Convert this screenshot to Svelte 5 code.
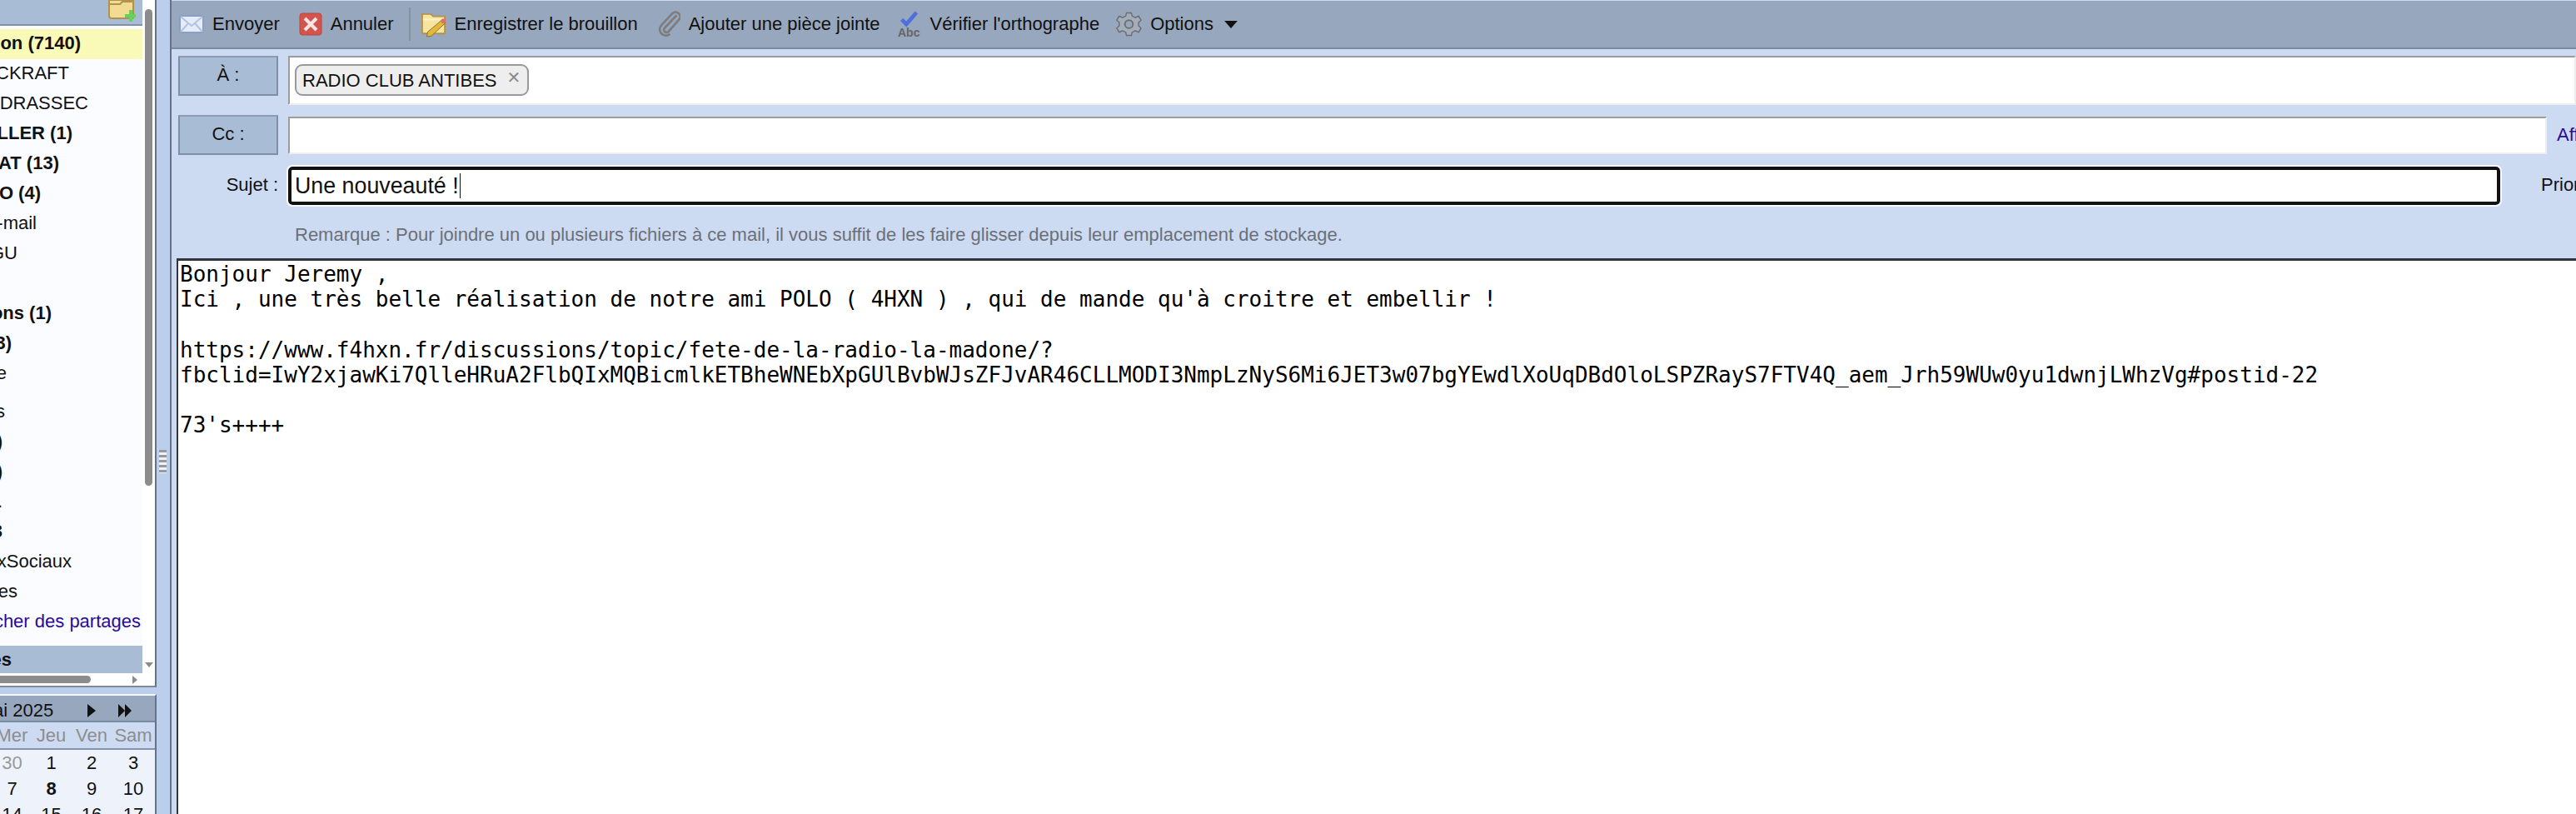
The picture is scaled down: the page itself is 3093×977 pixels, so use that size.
<script>
  // end = x where the folder label stops; the tree is scrolled so the start is cut off
  const folders = [
    { label: 'Réception (7140)', end: 97, bold: true, selected: true },
    { label: 'CKRAFT', end: 83 },
    { label: 'DRASSEC', end: 106 },
    { label: 'LLER (1)', end: 87, bold: true },
    { label: 'AT (13)', end: 71, bold: true },
    { label: 'O (4)', end: 49, bold: true },
    { label: 'e-mail', end: 44 },
    { label: 'GU', end: 21 },
    { label: '', end: 0 },
    { label: 'ons (1)', end: 62, bold: true },
    { label: '(3)', end: 14, bold: true },
    { label: 'e', end: 8 },
    { label: 's', end: 6, gap: true },
    { label: ')', end: 3, bold: true },
    { label: ')', end: 3, bold: true },
    { label: '.', end: 3 },
    { label: '3', end: 3, bold: true },
    { label: 'xSociaux', end: 86 },
    { label: 'es', end: 21 },
    { label: 'Rechercher des partages', end: 169, link: true }
  ];

  const calRows = [
    [['30', 'muted'], ['1'], ['2'], ['3']],
    [['7'], ['8', 'bold'], ['9'], ['10']],
    [['14'], ['15'], ['16'], ['17']]
  ];

  const url = 'fbclid=IwY2xjawKi7QlleHRuA2FlbQIxMQBicmlkETBheWNEbXpGUlBvbWJsZFJvAR46CLLMODI3NmpLzNyS6Mi6JET3w07bgYEwdlXoUqDBdOloLSPZRayS7FTV4Q_aem_Jrh59WUw0yu1dwnjLWhzVg#postid-22';
</script>

<div class="page">
  <aside class="side">
    <div class="tree-panel">
      <div class="tree-view">
        <div class="tree-head">
          <svg class="new-folder" width="33" height="28" viewBox="0 0 33 28">
            <path d="M1 0h28a1 1 0 0 1 1 1v20a1 1 0 0 1-1 1H4a3 3 0 0 1-3-3z" fill="#f2dc93" stroke="#b1924f" stroke-width="2"/>
            <path d="M2 5h12l3-3h12" fill="none" stroke="#b1924f" stroke-width="2"/>
            <path d="M25 14h4v5h4v4h-4v5h-4v-5h-5v-4h5z" fill="#64d25c" transform="translate(0 -2)"/>
          </svg>
        </div>
        <div class="tree-list">
          {#each folders as f}
            <div class="folder" class:bold={f.bold} class:selected={f.selected} class:gap={f.gap} class:link={f.link}>
              <span class="folder-label" style="width: {f.end}px">{f.label}</span>
            </div>
          {/each}
        </div>
        <div class="tree-foot"><span class="folder-label bold" style="width: 14px">es</span></div>
        <div class="hbar">
          <span class="hthumb"></span>
          <svg class="harrow" width="6" height="10" viewBox="0 0 6 10"><path d="M0 0l6 5-6 5z" fill="#8c8c8c"/></svg>
        </div>
      </div>
      <div class="vbar">
        <span class="vthumb"></span>
        <svg class="varrow" width="10" height="6" viewBox="0 0 10 6"><path d="M0 0h10l-5 6z" fill="#8c8c8c"/></svg>
      </div>
    </div>

    <div class="calendar">
      <div class="cal-head">
        <span class="month">ai 2025</span>
        <svg width="10" height="16" viewBox="0 0 10 16" class="cal-next"><path d="M0 0l10 8-10 8z" fill="#111"/></svg>
        <svg width="16" height="16" viewBox="0 0 18 16" class="cal-last" preserveAspectRatio="none"><path d="M0 0l9 8-9 8zM9 0l9 8-9 8z" fill="#111"/></svg>
      </div>
      <div class="cal-days">
        <span>Mer</span><span>Jeu</span><span>Ven</span><span>Sam</span>
      </div>
      <div class="cal-body">
        {#each calRows as row}
          <div class="cal-row">
            {#each row as c}
              <span class:muted={c[1] === 'muted'} class:bold={c[1] === 'bold'}>{c[0]}</span>
            {/each}
          </div>
        {/each}
      </div>
    </div>
  </aside>

  <div class="gutter">
    <span class="grip"></span>
  </div>

  <main class="compose">
    <div class="toolbar">
      <button class="tool send">
        <svg width="30" height="24" viewBox="0 0 30 24">
          <rect x="1" y="2" width="28" height="20" rx="2" fill="#e4ecf8" stroke="#8b9fc6" stroke-width="2"/>
          <path d="M2 3l13 11L28 3M2 21l9-10M28 21l-9-10" fill="none" stroke="#b3c3df" stroke-width="2"/>
        </svg>
        Envoyer
      </button>
      <button class="tool cancel">
        <svg width="28" height="28" viewBox="0 0 28 28">
          <rect x="1" y="1" width="26" height="26" rx="3" fill="#d2544c" stroke="#c0443e" stroke-width="1"/>
          <path d="M7 7l14 14M21 7L7 21" stroke="#f7e6e4" stroke-width="4"/>
        </svg>
        Annuler
      </button>
      <span class="sep"></span>
      <button class="tool draft">
        <svg width="30" height="34" viewBox="0 0 32 34">
          <path d="M1 4h11l3 3h14a1 1 0 0 1 1 1v21H3a2 2 0 0 1-2-2z" fill="#f6e4a0" stroke="#b1924f" stroke-width="2"/>
          <path d="M2 11h27" stroke="#fff4c8" stroke-width="2"/>
          <path d="M27 11l4 4-18 17-6 1 1-6z" fill="#e3b93c" stroke="#8a6d26" stroke-width="1"/>
          <circle cx="28" cy="13" r="3" fill="#e0706a"/>
        </svg>
        Enregistrer le brouillon
      </button>
      <button class="tool">
        <svg width="27" height="32" viewBox="0 0 30 32">
          <path d="M24 5L8 22a3.500 3.500 0 0 0 5 5L27 11a6 6 0 0 0-9-8L4 18a8 8 0 0 0 11 12" transform="translate(1 -1)" fill="none" stroke="#7d7d7d" stroke-width="3"/>
        </svg>
        Ajouter une pièce jointe
      </button>
      <button class="tool">
        <svg width="30" height="34" viewBox="0 0 32 34">
          <path d="M6 11l6 6L25 2" fill="none" stroke="#4f6fdc" stroke-width="5"/>
          <text x="1" y="33" class="abc">Abc</text>
        </svg>
        Vérifier l'orthographe
      </button>
      <button class="tool">
        <svg width="31" height="32" viewBox="0 0 32 32">
          <path d="M13 2h6l1 4 4 2 4-2 3 5-3 3v4l3 3-3 5-4-2-4 2-1 4h-6l-1-4-4-2-4 2-3-5 3-3v-4L1 11l3-5 4 2 4-2z" fill="#a3aebd" stroke="#6e6e6e" stroke-width="1.500"/>
          <circle cx="16" cy="16" r="5" fill="#97a7bd" stroke="#6e6e6e" stroke-width="2"/>
        </svg>
        Options
        <svg class="caret" width="18" height="9" viewBox="0 0 14 8"><path d="M0 0h14l-7 8z" fill="#111"/></svg>
      </button>
    </div>

    <div class="fields">
      <div class="field-row to-row">
        <span class="addr-btn">À :</span>
        <div class="addr-input to-input">
          <span class="chip">RADIO CLUB ANTIBES<span class="chip-x">✕</span></span>
        </div>
      </div>
      <div class="field-row cc-row">
        <span class="addr-btn">Cc :</span>
        <div class="addr-input cc-input"></div>
        <span class="show-link">Afficher Cci</span>
      </div>
      <div class="field-row subject-row">
        <label class="subject-label" for="subject">Sujet :</label>
        <div class="subject" id="subject">Une nouveauté !<span class="cursor"></span></div>
        <span class="prio">Priorité</span>
      </div>
      <p class="note">Remarque : Pour joindre un ou plusieurs fichiers à ce mail, il vous suffit de les faire glisser depuis leur emplacement de stockage.</p>
    </div>

    <div class="body-wrap">
      <div class="message">
        <div>Bonjour Jeremy ,</div>
        <div>Ici , une très belle réalisation de notre ami POLO ( 4HXN ) , qui de mande qu'à croitre et embellir !</div>
        <div class="blank"></div>
        <div>https://www.f4hxn.fr/discussions/topic/fete-de-la-radio-la-madone/?</div>
        <div>{url}</div>
        <div class="blank"></div>
        <div>73's++++</div>
      </div>
    </div>
  </main>
</div>

<style>
  :global(body) { margin: 0; overflow: hidden; background: #bbcfec; }
  .page {
    display: flex;
    width: 3093px;
    height: 977px;
    overflow: hidden;
    font-family: "Liberation Sans", Arial, sans-serif;
    font-size: 22px;
    color: #111;
    background: #bbcfec;
  }
  button { font: inherit; color: inherit; background: none; border: 0; padding: 0; }

  /* left column */
  .side { width: 188px; flex: none; display: flex; flex-direction: column; overflow: hidden; }
  .tree-panel {
    flex: none;
    display: flex;
    background: #fff;
    border-right: 2px solid #667386;
    border-bottom: 2px solid #7f8b9c;
    box-sizing: border-box;
    height: 825px;
  }
  .tree-view { width: 171px; flex: none; display: flex; flex-direction: column; overflow: hidden; }
  .tree-head {
    height: 29px;
    flex: none;
    background: #a8bcd6;
    border-bottom: 2px solid #8091a8;
    display: flex;
    justify-content: flex-end;
    padding-right: 8px;
  }
  .tree-list {
    flex: 1;
    background: #fafcff;
    padding-top: 4px;
  }
  .folder {
    height: 36px;
    box-sizing: border-box;
    padding-bottom: 3px;
    display: flex;
    align-items: center;
    white-space: nowrap;
  }
  .folder.gap { margin-top: 10px; }
  .folder.selected { background: #fafab8; }
  .folder.link { color: #2a0a9a; }
  .folder-label { display: flex; justify-content: flex-end; flex: none; white-space: nowrap; }
  .bold { font-weight: 700; }
  .tree-foot {
    height: 33px;
    flex: none;
    background: #a8bcd6;
    display: flex;
    align-items: center;
    white-space: nowrap;
  }
  .hbar {
    height: 15px;
    flex: none;
    display: flex;
    align-items: center;
    justify-content: space-between;
    padding-right: 6px;
  }
  .hthumb { width: 109px; height: 9px; background: #8c8c8c; border-radius: 0 5px 5px 0; }
  .vbar { flex: 1; position: relative; }
  .vthumb {
    position: absolute;
    left: 3px;
    top: 11px;
    width: 9px;
    height: 572px;
    background: #8c8c8c;
    border-radius: 5px;
  }
  .varrow { position: absolute; left: 3px; top: 795px; }

  .calendar {
    margin-top: 8px;
    flex: 1;
    display: flex;
    flex-direction: column;
    border-top: 2px solid #f4f7fc;
    border-right: 2px solid #667386;
    background: #eef3fb;
  }
  .cal-head {
    height: 25px;
    padding-top: 5px;
    flex: none;
    background: #97a7bd;
    border-bottom: 2px solid #7a8aa0;
    display: flex;
    align-items: center;
    white-space: nowrap;
  }
  .month { width: 113px; margin-left: -8px; flex: none; overflow: hidden; }
  .cal-last { margin-left: 27px; }
  .cal-days, .cal-row {
    display: grid;
    grid-template-columns: 47px 47px 50px 50px;
    justify-items: center;
    margin-left: -9px;
  }
  .cal-days {
    height: 31px;
    align-items: center;
    flex: none;
    background: #cddbf2;
    color: #8d8d8d;
    border-bottom: 2px solid #8494aa;
  }
  .cal-row { height: 31px; align-items: center; }
  .muted { color: #999; }

  .gutter { width: 16px; flex: none; position: relative; border-right: 2px solid #667386; }
  .grip {
    position: absolute;
    left: 3px;
    top: 540px;
    width: 9px;
    height: 28px;
    background: repeating-linear-gradient(#9a9a9a 0 3px, #eef3fb 3px 6px);
  }

  /* compose */
  .compose { flex: 1; min-width: 0; display: flex; flex-direction: column; background: #cddbf2; }
  .toolbar {
    margin-top: 1px;
    height: 56px;
    flex: none;
    display: flex;
    align-items: center;
    background: #97a7bd;
    border-bottom: 2px solid #7a8aa0;
    padding-left: 9px;
    white-space: nowrap;
  }
  .tool { display: flex; align-items: center; gap: 10px; margin-right: 20px; }
  .tool.send { margin-right: 23px; }
  .tool.cancel { margin-right: 18px; }
  .tool.draft { margin-right: 24px; }
  .sep { width: 2px; height: 40px; background: #84949e; margin-right: 13px; }
  .abc { font: 700 15px "Liberation Sans", sans-serif; fill: #666; }
  .caret { margin-left: 2px; }

  .fields { flex: none; height: 251px; padding-top: 8px; padding-left: 8px; box-sizing: border-box; }
  .field-row { display: flex; align-items: flex-start; }
  .to-row { height: 71px; }
  .cc-row { height: 62px; }
  .addr-btn {
    width: 120px;
    height: 48px;
    box-sizing: border-box;
    flex: none;
    display: flex;
    align-items: center;
    justify-content: center;
    background: #a8bcd6;
    border: 2px solid #7f8fa5;
    border-top-color: #8c9cb2;
    margin-right: 12px;
    padding-bottom: 2px;
  }
  .addr-input {
    flex: 1;
    box-sizing: border-box;
    background: #fff;
    border: 2px solid #9c9c9c;
    border-right-color: #eee;
    border-bottom-color: #eee;
  }
  .to-input { height: 59px; padding: 8px 6px; }
  .cc-input { flex: none; width: 2712px; height: 45px; margin-top: 2px; }
  .chip {
    display: inline-flex;
    align-items: center;
    height: 38px;
    width: 281px;
    box-sizing: border-box;
    padding: 1px 0 0 7px;
    border: 2px solid #999;
    border-radius: 9px;
    background: #eee;
    white-space: nowrap;
  }
  .chip-x { color: #8a8a8a; font-size: 20px; margin: -8px 0 0 12px; font-weight: 700; font-family: "DejaVu Sans", sans-serif; }
  .show-link { color: #2a0a9a; margin-left: 12px; margin-top: 4px; line-height: 40px; white-space: nowrap; }
  .subject-row { align-items: center; height: 46px; }
  .subject-label { width: 120px; margin-right: 12px; flex: none; text-align: right; padding-bottom: 2px; }
  .subject {
    width: 2656px;
    height: 46px;
    flex: none;
    box-sizing: border-box;
    display: flex;
    align-items: center;
    padding-left: 4px;
    background: #fff;
    border: 4px solid #111;
    border-radius: 5px;
    outline: 2px solid #f6f9ff;
    font-size: 26.8px;
    white-space: nowrap;
  }
  .cursor { width: 1px; height: 30px; background: #111; margin-left: 1px; }
  .prio { margin-left: 49px; white-space: nowrap; padding-bottom: 2px; }
  .note { margin: 24px 0 0 140px; color: #6b7078; line-height: 24px; white-space: nowrap; }

  .body-wrap { flex: 1; padding-left: 6px; min-height: 0; }
  .message {
    height: 100%;
    box-sizing: border-box;
    background: #fff;
    border-top: 3px solid #2f3640;
    border-left: 2px solid #2f3640;
    padding: 1px 0 0 2px;
    font-family: "DejaVu Sans Mono", "Liberation Mono", monospace;
    font-size: 26px;
    line-height: 30.2px;
    white-space: nowrap;
    color: #000;
  }
  .blank { height: 30.2px; }
</style>
